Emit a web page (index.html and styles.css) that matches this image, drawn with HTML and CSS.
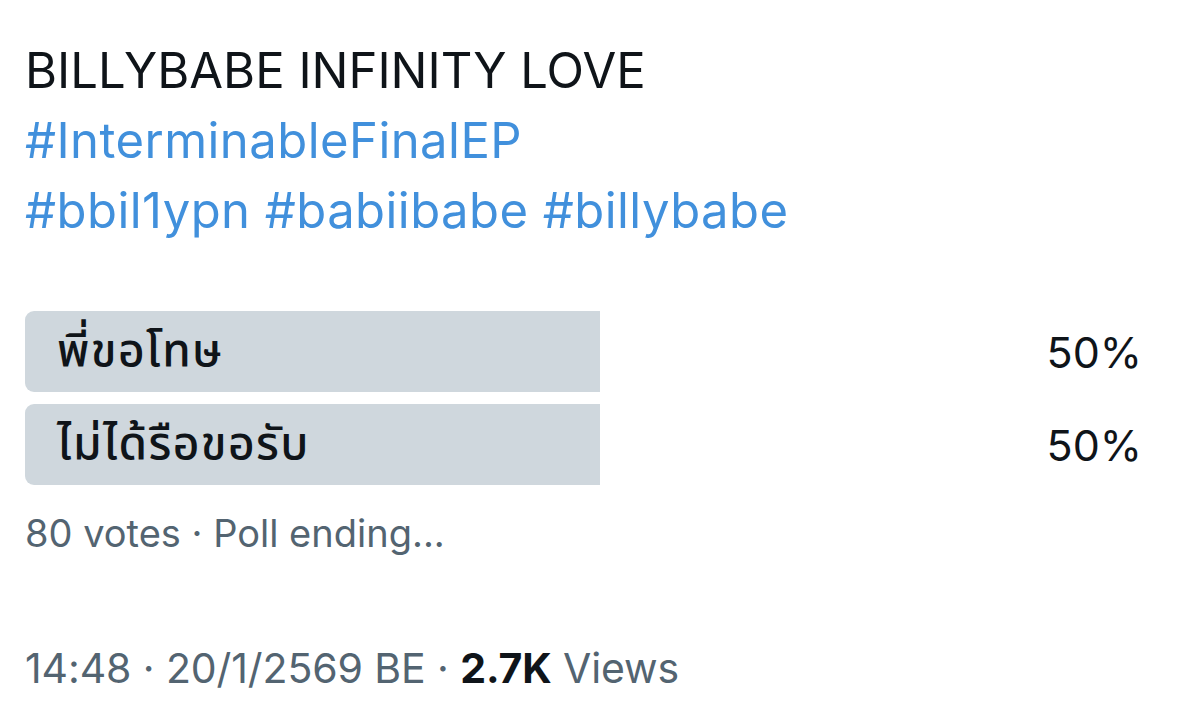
FILE: index.html
```html
<!DOCTYPE html>
<html lang="th">
<head>
<meta charset="utf-8">
<link rel="stylesheet" href="styles.css">
</head>
<body>
<div class="tweet">
  <div class="text">
    <div class="line">BILLYBABE INFINITY LOVE</div>
    <div class="line tag">#InterminableFinalEP</div>
    <div class="line tag">#bbil1ypn #babiibabe #billybabe</div>
  </div>
  <div class="poll">
    <div class="option">
      <div class="bar" style="width:575px"><span class="label">พี่ขอโทษ</span></div>
      <div class="pct">50%</div>
    </div>
    <div class="option">
      <div class="bar" style="width:575px"><span class="label">ไม่ได้รือขอรับ</span></div>
      <div class="pct">50%</div>
    </div>
  </div>
  <div class="votes">80 votes · Poll ending...</div>
  <div class="meta">14:48 · 20/1/2569 BE · <b>2.7K</b> Views</div>
</div>
</body>
</html>
```
FILE: styles.css
```css
html, body {
  margin: 0;
  background: #ffffff;
}
body {
  font-family: Inter, "Liberation Sans", "Noto Sans Thai", sans-serif;
  color: #0f1419;
}
.tweet {
  padding: 36px 58px 0 25px;
}
.text .line {
  font-size: 49px;
  line-height: 70px;
  letter-spacing: 0;
  white-space: nowrap;
}
.text .tag {
  color: #4190dc;
  letter-spacing: 0.45px;
}
.poll {
  margin-top: 65px;
  display: flex;
  flex-direction: column;
  gap: 12px;
}
.option {
  display: flex;
  align-items: center;
  justify-content: space-between;
  height: 81px;
}
.bar {
  height: 81px;
  background: #cfd7dd;
  border-radius: 9px 0 0 9px;
  display: flex;
  align-items: center;
  box-sizing: border-box;
  padding-left: 32px;
}
.label {
  font-size: 46px;
  font-weight: 500;
  letter-spacing: 1.4px;
  color: #0f1419;
  font-family: "Noto Sans Thai", "Noto Sans", "Liberation Sans", sans-serif;
}
.pct {
  font-size: 43px;
}
.votes {
  margin-top: 23px;
  font-size: 38px;
  line-height: 50px;
  color: #536471;
}
.meta {
  margin-top: 85px;
  font-size: 41px;
  line-height: 50px;
  letter-spacing: -0.1px;
  color: #536471;
}
.meta b {
  color: #0f1419;
}
```
